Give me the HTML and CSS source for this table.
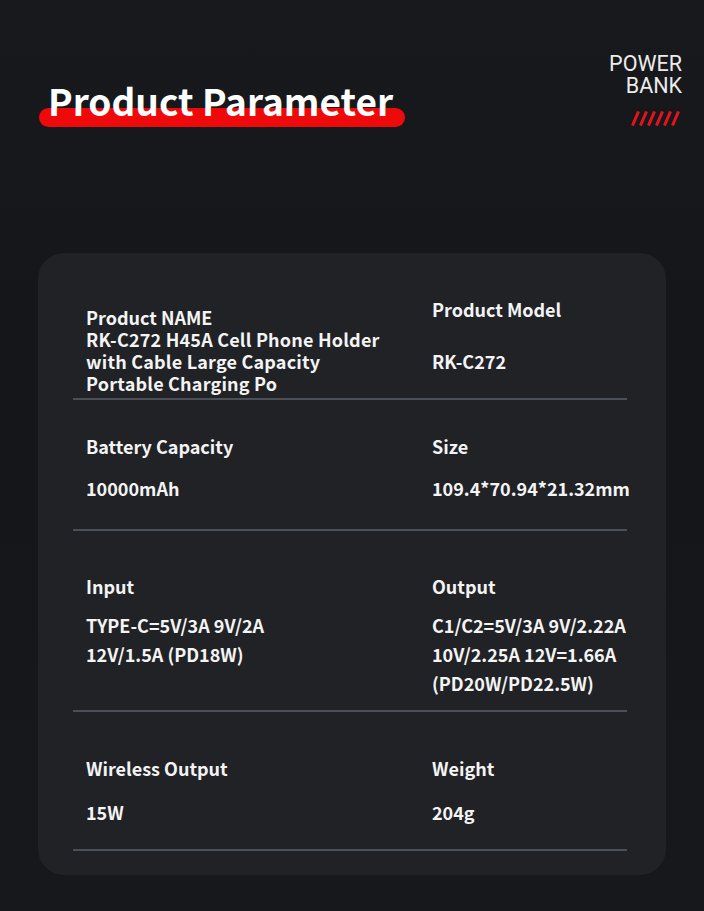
FILE: index.html
```html
<!DOCTYPE html>
<html lang="en">
<head>
<meta charset="utf-8">
<title>Product Parameter</title>
<link rel="stylesheet" href="styles.css">
</head>
<body>
<div class="page">
  <header class="header">
    <div class="title-wrap">
      <h1 class="title">Product Parameter</h1>
    </div>
    <div class="brand">
      <div class="brand-line">POWER</div>
      <div class="brand-line">BANK</div>
      <svg class="stripes" width="50" height="15" viewBox="0 0 50 15">
        <g stroke="#e3151a" stroke-width="3" stroke-linecap="butt">
          <line x1="1.5" y1="14.5" x2="7.5" y2="0.5"/>
          <line x1="9.5" y1="14.5" x2="15.5" y2="0.5"/>
          <line x1="17.5" y1="14.5" x2="23.5" y2="0.5"/>
          <line x1="25.5" y1="14.5" x2="31.5" y2="0.5"/>
          <line x1="33.5" y1="14.5" x2="39.5" y2="0.5"/>
          <line x1="41.5" y1="14.5" x2="47.5" y2="0.5"/>
        </g>
      </svg>
    </div>
  </header>

  <section class="card">
    <div class="row row-1">
      <div class="cell cell-name">
        <div class="label">Product NAME</div>
        <div class="value">RK-C272 H45A Cell Phone Holder<br>with Cable Large Capacity<br>Portable Charging Po</div>
      </div>
      <div class="cell cell-model">
        <div class="label">Product Model</div>
        <div class="value">RK-C272</div>
      </div>
    </div>
    <div class="rule"></div>

    <div class="row row-2">
      <div class="cell">
        <div class="label">Battery Capacity</div>
        <div class="value">10000mAh</div>
      </div>
      <div class="cell">
        <div class="label">Size</div>
        <div class="value">109.4*70.94*21.32mm</div>
      </div>
    </div>
    <div class="rule"></div>

    <div class="row row-3">
      <div class="cell">
        <div class="label">Input</div>
        <div class="value">TYPE-C=5V/3A 9V/2A<br>12V/1.5A (PD18W)</div>
      </div>
      <div class="cell">
        <div class="label">Output</div>
        <div class="value">C1/C2=5V/3A 9V/2.22A<br>10V/2.25A 12V=1.66A<br>(PD20W/PD22.5W)</div>
      </div>
    </div>
    <div class="rule"></div>

    <div class="row row-4">
      <div class="cell">
        <div class="label">Wireless Output</div>
        <div class="value">15W</div>
      </div>
      <div class="cell">
        <div class="label">Weight</div>
        <div class="value">204g</div>
      </div>
    </div>
    <div class="rule"></div>
  </section>
</div>
</body>
</html>
```

FILE: styles.css
```css
* { box-sizing: border-box; }

html, body {
  margin: 0;
  padding: 0;
}

body {
  background: #16171b;
  font-family: "Noto Sans CJK SC", "Noto Sans", sans-serif;
  color: #f4f4f4;
}

.page {
  width: 704px;
  height: 911px;
  background: linear-gradient(180deg, #18191d 0%, #15161a 40%, #17181c 100%);
  padding: 0 0 0 38px;
  overflow: hidden;
}

.header {
  display: flex;
  justify-content: space-between;
  align-items: flex-start;
  height: 253px;
  padding-right: 22px;
}

.title-wrap {
  position: relative;
  margin-top: 79px;
  width: 367px;
}

.title-wrap::before {
  content: "";
  position: absolute;
  left: 1px;
  top: 29px;
  width: 366px;
  height: 19px;
  border-radius: 10px;
  background: #ee0a0a;
}

.title {
  position: relative;
  margin: 0 0 0 10px;
  font-size: 37px;
  line-height: 42px;
  font-weight: 700;
  color: #ffffff;
  white-space: nowrap;
}

.brand {
  margin-top: 53px;
  display: flex;
  flex-direction: column;
  align-items: flex-end;
}

.brand-line {
  text-align: right;
  font-family: Roboto, "Liberation Sans", sans-serif;
  font-size: 21.5px;
  line-height: 22px;
  height: 22px;
  font-weight: 400;
  color: #ececec;
}

.stripes {
  display: block;
  margin-top: 14px;
  margin-right: 1px;
}

.card {
  width: 628px;
  height: 622px;
  background: #202226;
  border-radius: 26px;
  padding: 0 39px 0 35px;
}

.row {
  display: grid;
  grid-template-columns: 346px 1fr;
  padding-left: 13px;
}

.cell {
  display: flex;
  flex-direction: column;
}

.label, .value {
  font-size: 18px;
  line-height: 22px;
  font-weight: 700;
  white-space: nowrap;
}

.rule {
  height: 2px;
  background: #4b4f57;
}

/* row 1 */
.row-1 { height: 145px; }
.cell-name { padding-top: 53px; }
.cell-name .value { letter-spacing: 0.2px; }
.cell-model { padding-top: 45px; }
.cell-model .value { margin-top: 30px; }

/* row 2 */
.row-2 { height: 129px; padding-top: 35px; }
.row-2 .value { margin-top: 20px; }

/* row 3 */
.row-3 { height: 179px; padding-top: 44px; }
.row-3 .value { margin-top: 14px; line-height: 29px; }

/* row 4 */
.row-4 { height: 137px; padding-top: 45px; }
.row-4 .value { margin-top: 22px; }
```
